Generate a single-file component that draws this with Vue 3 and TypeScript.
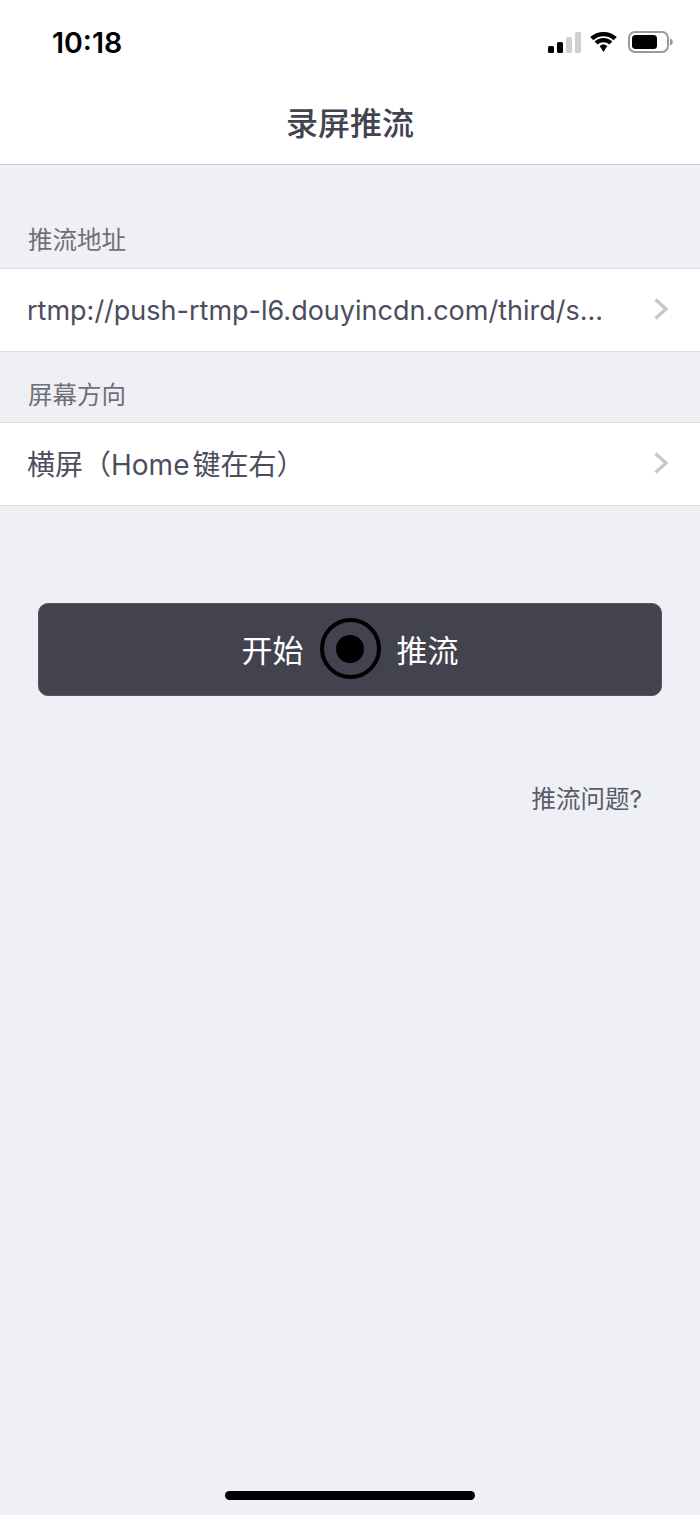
<script setup lang="ts">
const streamUrl = 'rtmp://push-rtmp-l6.douyincdn.com/third/s...'
</script>

<template>
  <div class="page">
    <header class="top">
      <div class="status">
        <span class="time">10:18</span>
        <div class="status-icons">
          <svg width="33" height="21" viewBox="0 0 33 21">
            <rect x="0" y="14" width="6" height="7" rx="1.5" fill="#000" />
            <rect x="9" y="10" width="6" height="11" rx="1.5" fill="#000" />
            <rect x="18" y="5" width="6" height="16" rx="1.5" fill="#cfcfcf" />
            <rect x="27" y="0" width="6" height="21" rx="1.5" fill="#cfcfcf" />
          </svg>
          <svg class="wifi" width="27" height="21" viewBox="1 0 27 21">
            <path d="M14.5 4.2c-3.900 0-7.400 1.500-10.100 4L1.200 5C4.700 1.900 9.400 0 14.500 0s9.800 1.900 13.300 5l-3.200 3.200c-2.700-2.500-6.200-4-10.100-4z" fill="#000" />
            <path d="M14.500 10.300c-2.200 0-4.200.8-5.800 2.200L5.600 9.400c2.400-2.100 5.500-3.400 8.900-3.400s6.500 1.300 8.900 3.400l-3.100 3.100c-1.600-1.400-3.600-2.200-5.800-2.200z" fill="#000" />
            <path d="M14.500 12.400c1.500 0 2.800.6 3.800 1.500l-3.800 6.100-3.800-6.100c1-.9 2.300-1.500 3.800-1.500z" fill="#000" />
          </svg>
          <svg class="battery" width="45" height="22" viewBox="0 0 45 22">
            <rect x="1" y="1" width="39" height="20" rx="6" fill="none" stroke="#9a9a9a" stroke-width="2" />
            <rect x="4" y="4" width="25" height="14" rx="3.500" fill="#000" />
            <path d="M42 7.500c1.800.6 2.800 1.900 2.800 3.500s-1 2.900-2.800 3.500z" fill="#9a9a9a" />
          </svg>
        </div>
      </div>
      <h1 class="title">录屏推流</h1>
    </header>

    <main class="content">
      <div class="label">推流地址</div>
      <div class="row">
        <span class="value url">{{ streamUrl }}</span>
        <svg class="chevron" width="16" height="24" viewBox="0 0 16 24">
          <path d="M2.500 2.500 13 12 2.500 21.500" fill="none" stroke="#c8c8cc" stroke-width="3.400" />
        </svg>
      </div>

      <div class="label second">屏幕方向</div>
      <div class="row">
        <span class="value direction">横屏（<span class="latin">Home</span>键在右）</span>
        <svg class="chevron" width="16" height="24" viewBox="0 0 16 24">
          <path d="M2.500 2.500 13 12 2.500 21.500" fill="none" stroke="#c8c8cc" stroke-width="3.400" />
        </svg>
      </div>

      <button class="start" type="button">
        <span>开始</span>
        <span class="rec"><span class="dot"></span></span>
        <span>推流</span>
      </button>

      <div class="help">推流问题?</div>
    </main>

    <div class="home-bar"></div>
  </div>
</template>

<style>
html,
body {
  margin: 0;
  background: #eff0f6;
}
</style>

<style scoped>
.page {
  width: 700px;
  height: 1515px;
  display: flex;
  flex-direction: column;
  background: #eff0f6;
  overflow: hidden;
  font-family: Inter, "Noto Sans CJK SC", sans-serif;
}
.top {
  height: 164px;
  background: #fff;
  border-bottom: 1px solid #cfcfd2;
}
.status {
  height: 84px;
  box-sizing: border-box;
  padding: 0 27px 0 52px;
  display: flex;
  align-items: center;
  justify-content: space-between;
}
.time {
  font-size: 28.500px;
  font-weight: 600;
  color: #000;
}
.status-icons {
  display: flex;
  align-items: center;
}
.wifi {
  margin-left: 9px;
}
.battery {
  margin-left: 11px;
}
.title {
  margin: 0;
  height: 80px;
  line-height: 80px;
  text-align: center;
  font-size: 32px;
  font-weight: 500;
  color: #42434f;
}
.content {
  flex: 1;
  display: flex;
  flex-direction: column;
  padding-top: 40px;
}
.label {
  height: 63px;
  line-height: 71px;
  padding-left: 28px;
  font-size: 24.500px;
  color: #6f6f75;
}
.label.second {
  height: 70px;
  line-height: 87px;
}
.row {
  height: 82px;
  background: #fff;
  border-top: 1px solid #dcdce0;
  border-bottom: 1px solid #dcdce0;
  padding: 0 31px 0 27px;
  display: flex;
  align-items: center;
  justify-content: space-between;
}
.value {
  font-size: 28px;
  color: #4c4d5e;
  white-space: nowrap;
}
.value.url {
  font-size: 27px;
}
.value.direction {
  margin-bottom: 2px;
}
.latin {
  margin-right: 3px;
}
.chevron {
  flex: none;
  margin-bottom: 2px;
}
.start {
  margin: 97px 38px 0;
  height: 93px;
  padding: 0 0 2px;
  border: 1px solid #55555f;
  border-radius: 10px;
  background: #42434f;
  color: #fff;
  font: inherit;
  font-size: 31px;
  display: flex;
  align-items: center;
  justify-content: center;
  gap: 16px;
}
.rec {
  width: 61px;
  height: 61px;
  box-sizing: border-box;
  border: 4px solid #000;
  border-radius: 50%;
  display: flex;
  align-items: center;
  justify-content: center;
}
.dot {
  width: 28px;
  height: 28px;
  border-radius: 50%;
  background: #000;
}
.help {
  margin-top: 86px;
  padding-right: 58px;
  text-align: right;
  font-size: 24.500px;
  line-height: 34px;
  color: #5b5c68;
}
.home-bar {
  width: 250px;
  height: 9px;
  margin: 0 auto 15px;
  border-radius: 5px;
  background: #000;
}
</style>
